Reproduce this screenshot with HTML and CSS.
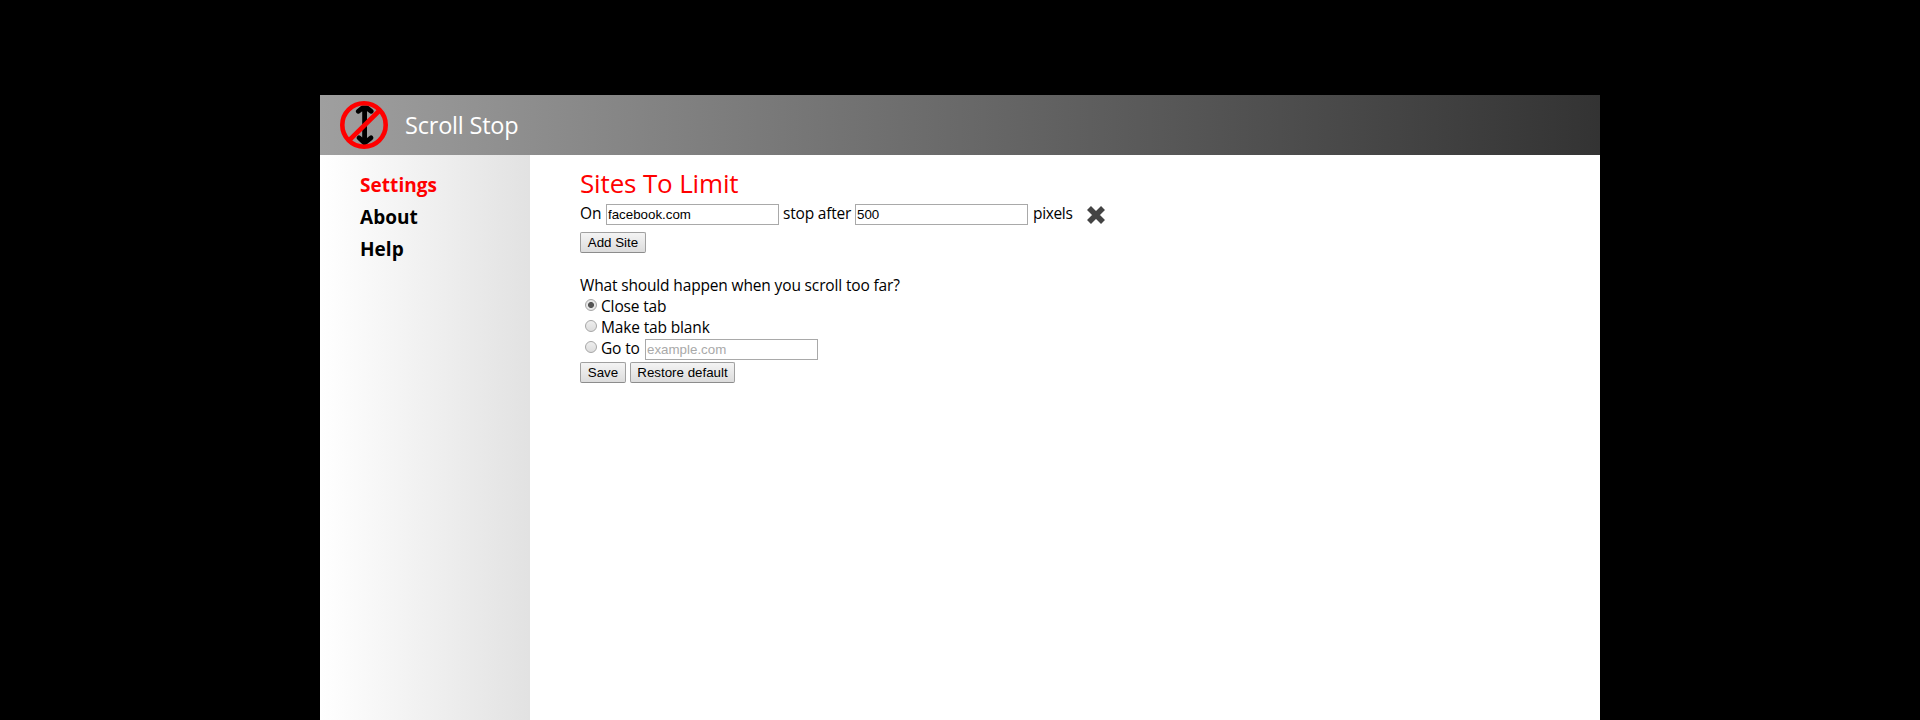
FILE: index.html
```html
<!DOCTYPE html>
<html lang="en">
<head>
<meta charset="utf-8">
<title>Scroll Stop</title>
<link rel="stylesheet" href="styles.css">
</head>
<body>
<div class="page">
  <header class="header">
    <svg class="logo" viewBox="0 0 48 48">
      <path d="M24.600 7v34M18.200 10.300l4.300-3.300h4.500l4.300 3.300M19 36.800l5.600 5.200 6.400-5.200" fill="none" stroke="#000" stroke-width="4.800" stroke-linecap="round" stroke-linejoin="round"/>
      <path d="M10 38.500L39 10" stroke="#f00" stroke-width="4.600"/>
      <circle cx="24" cy="24" r="21.700" fill="none" stroke="#f00" stroke-width="4.600"/>
    </svg>
    <span class="brand">Scroll Stop</span>
  </header>
  <div class="body">
    <nav class="sidebar">
      <a class="nav-item active">Settings</a>
      <a class="nav-item">About</a>
      <a class="nav-item">Help</a>
    </nav>
    <main class="content">
      <h1 class="title">Sites To Limit</h1>
      <div class="row site">
        <span class="on">On</span>
        <input class="field" type="text" value="facebook.com">
        <span class="after">stop after</span>
        <input class="field" type="text" value="500">
        <span class="pixels">pixels</span>
        <svg class="remove" viewBox="0 0 20 20"><path d="M3 3l14 14M17 3L3 17" stroke="#444" stroke-width="5.600"/></svg>
      </div>
      <button class="button add">Add Site</button>
      <div class="row question"><span>What should happen when you scroll too far?</span></div>
      <label class="row"><input class="radio" type="radio" name="action" checked><span>Close tab</span></label>
      <label class="row"><input class="radio" type="radio" name="action"><span>Make tab blank</span></label>
      <label class="row"><input class="radio" type="radio" name="action"><span class="go">Go to</span><input class="field url" type="text" placeholder="example.com"></label>
      <div class="actions">
        <button class="button save">Save</button>
        <button class="button restore">Restore default</button>
      </div>
    </main>
  </div>
</div>
</body>
</html>
```
FILE: styles.css
```css
* { box-sizing: border-box; }
body {
  margin: 0;
  height: 720px;
  overflow: hidden;
  background: #000;
  padding-top: 95px;
  font-family: "Open Sans", "Noto Sans", sans-serif;
  font-size: 15.5px;
  letter-spacing: -0.15px;
  color: #000;
}
.page { width: 1280px; height: 625px; margin: 0 auto; background: #fff; }
.header {
  height: 60px;
  display: flex;
  align-items: center;
  padding-left: 20px;
  background: linear-gradient(to right, #9f9f9f, #333);
}
.logo { width: 48px; height: 48px; }
.brand { margin-left: 17px; font-size: 23.5px; line-height: 32px; letter-spacing: -0.2px; color: #fff; white-space: nowrap; }
.body { display: flex; height: 565px; }
.sidebar {
  width: 210px;
  padding: 14px 0 0 40px;
  display: flex;
  flex-direction: column;
  background: linear-gradient(to right, #fff, #e2e2e2);
}
.nav-item { height: 32px; line-height: 32px; font-size: 19px; font-weight: 700; letter-spacing: 0.05px; }
.active { color: #f00; }
.content { flex: 1; padding: 9px 0 0 50px; }
.title { margin: 0; height: 38px; line-height: 38px; font-size: 26px; font-weight: 400; letter-spacing: -0.15px; color: #f00; }
.row { display: flex; align-items: center; height: 21px; line-height: 21px; white-space: nowrap; }
.site { margin-top: 2px; }
.site span { margin-bottom: 2px; }
.on { width: 26px; }
.after { width: 76px; padding-left: 4px; letter-spacing: -0.2px; }
.pixels { width: 58px; padding-left: 5px; letter-spacing: -0.35px; }
.field {
  width: 173px;
  height: 21px;
  margin: 0;
  padding: 1px;
  border: 1px solid #a9a9a9;
  background: #fff;
  color: #000;
  font: 13.333px "Liberation Sans", Arial, sans-serif;
}
.field::placeholder { color: #a9a9a9; }
.url { margin-top: 2px; }
.remove { width: 20px; height: 20px; }
.button {
  display: block;
  height: 21px;
  padding: 0 0 1px;
  border: 1px solid #a0a0a0;
  border-bottom-color: #8c8c8c;
  border-radius: 2px;
  background: linear-gradient(#f4f4f4, #dcdcdc);
  color: #000;
  font: 13.333px "Liberation Sans", Arial, sans-serif;
  white-space: nowrap;
}
.add { width: 66px; margin-top: 7px; }
.question { margin-top: 22px; }
.radio {
  appearance: none;
  width: 12px;
  height: 12px;
  margin: 0 4px 3px 5px;
  border: 1px solid #a6a6a6;
  border-radius: 50%;
  background: linear-gradient(#eee, #dcdcdc);
}
.radio:checked { background: radial-gradient(circle, #555 0 2.6px, #e6e6e6 3.4px); }
.go { width: 44px; }
.actions { display: flex; gap: 4px; margin-top: 3px; }
.save { width: 46px; }
.restore { width: 105px; }
```
